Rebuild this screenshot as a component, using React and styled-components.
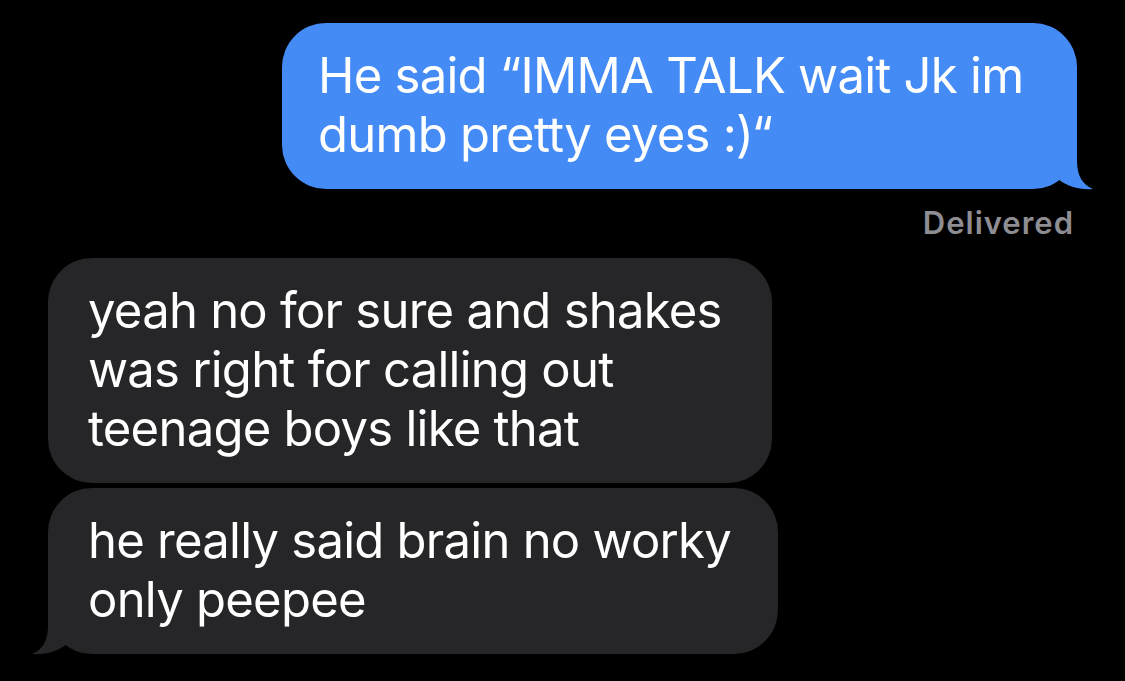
import React from "react";
import styled, { createGlobalStyle } from "styled-components";

const Global = createGlobalStyle`
  html, body { margin: 0; padding: 0; background: #000; }
  body { width: 1125px; height: 681px; overflow: hidden; }
`;

const Thread = styled.div`
  box-sizing: border-box;
  width: 1125px;
  height: 681px;
  background: #000;
  padding: 23px 48px 0 48px;
  display: flex;
  flex-direction: column;
  font-family: Inter, "Liberation Sans", sans-serif;
`;

const Row = styled.div`
  display: flex;
  justify-content: ${(p) => (p.$out ? "flex-end" : "flex-start")};
  margin-top: ${(p) => p.$gap || 0}px;
`;

const Bubble = styled.div`
  position: relative;
  box-sizing: border-box;
  width: ${(p) => p.$w}px;
  padding: 23px ${(p) => (p.$out ? 40 : 30)}px 25px ${(p) => (p.$out ? 36 : 40)}px;
  border-radius: 44px;
  background: ${(p) => (p.$out ? "#458BF6" : "#262629")};
  color: #fff;
  font-size: 49px;
  line-height: 59px;
  letter-spacing: -0.75px;
  white-space: nowrap;
`;

const Tail = styled.svg`
  position: absolute;
  bottom: -2px;
  ${(p) => (p.$out ? "right: -18px;" : "left: -18px; transform: scaleX(-1);")}
  width: 55px;
  height: 50px;
  fill: ${(p) => (p.$out ? "#458BF6" : "#262629")};
`;

const Status = styled.div`
  display: flex;
  justify-content: flex-end;
  padding-right: 3px;
  margin-top: 16px;
  font-size: 31px;
  line-height: 36px;
  font-weight: 600;
  letter-spacing: 1px;
  color: #8d8d93;
`;

const BubbleTail = ({ out }) => (
  <Tail $out={out} viewBox="0 0 55 50">
    <path d="M37 4 L37 20 C37 35 43 44 53 48 C40 49 28 46 18 38 L10 20 L20 4 Z" />
  </Tail>
);

export default function App() {
  return (
    <>
      <Global />
      <Thread>
        <Row $out>
          <Bubble $out $w={795}>
            He said “IMMA TALK wait Jk im
            <br />
            dumb pretty eyes :)“
            <BubbleTail out />
          </Bubble>
        </Row>
        <Status>Delivered</Status>
        <Row $gap={17}>
          <Bubble $w={724}>
            yeah no for sure and shakes
            <br />
            was right for calling out
            <br />
            teenage boys like that
          </Bubble>
        </Row>
        <Row $gap={5}>
          <Bubble $w={730}>
            he really said brain no worky
            <br />
            only peepee
            <BubbleTail />
          </Bubble>
        </Row>
      </Thread>
    </>
  );
}
